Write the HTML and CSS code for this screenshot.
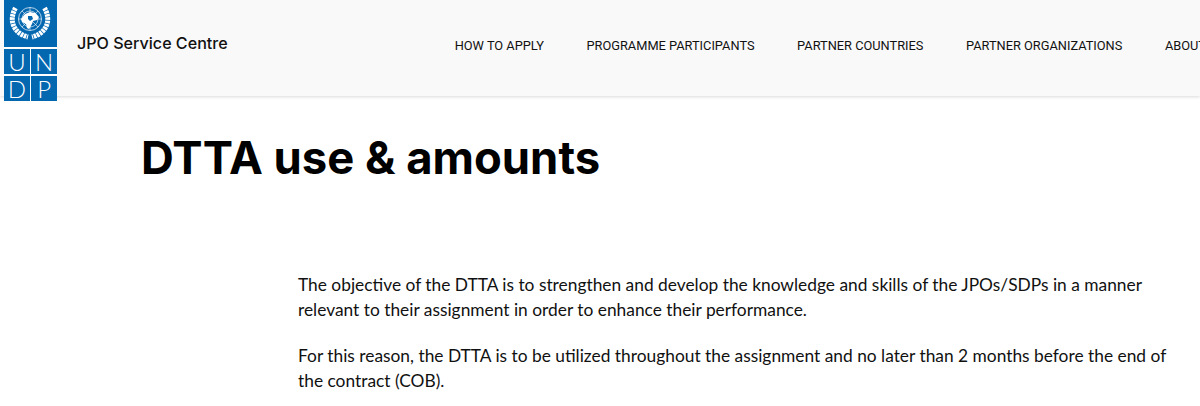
FILE: index.html
```html
<!DOCTYPE html>
<html>
<head>
    <title>DTTA use &amp; amounts</title>
    <link rel="stylesheet" href="styles.css">
</head>
<body>
    <header class="site-header">
        <a class="logo" href="#">
            <div class="logo-top">
                <svg width="53" height="47" viewBox="0 0 53 47">
                    <!-- UN emblem -->
                    <g fill="none" stroke="#fff">
                        <circle cx="26" cy="19" r="11.500" stroke-width="0.7"/>
                        <circle cx="26" cy="19" r="8" stroke-width="0.6"/>
                        <path d="M26 7.500v23M14.500 19h23M18 11l16 16M34 11L18 27" stroke-width="0.6"/>
                        <path d="M11.500 8C4.500 20 9 33 24 37M40.500 8c7 12 2.500 25-12.500 29" stroke-width="5" stroke-dasharray="2.600 .7"/>
                    </g>
                    <path d="M17 19l4-5 5-2 5 1 4 4-2 3-4 1-1 3-3 5-2-1-1-4-4-2z" fill="#fff"/>
                    <path d="M24 16h4l1 3-3 2-2-2z" fill="#0468b1"/>
                </svg>
            </div>
            <div class="logo-letters">
                <span>U</span><span>N</span><span>D</span><span>P</span>
            </div>
        </a>
        <div class="site-name">JPO Service Centre</div>
        <nav class="main-nav">
            <a href="#">HOW TO APPLY</a>
            <a href="#">PROGRAMME PARTICIPANTS</a>
            <a href="#">PARTNER COUNTRIES</a>
            <a href="#">PARTNER ORGANIZATIONS</a>
            <a href="#">ABOUT</a>
        </nav>
    </header>
    <main class="page">
        <h1>DTTA use &amp; amounts</h1>
        <div class="content">
            <p>The objective of the DTTA is to strengthen and develop the knowledge and skills of the JPOs/SDPs in a manner relevant to their assignment in order to enhance their performance.</p>
            <p>For this reason, the DTTA is to be utilized throughout the assignment and no later than 2 months before the end of the contract (COB).</p>
        </div>
    </main>
</body>
</html>
```
FILE: styles.css
```css
html, body { height: 100%; }
body {
    margin: 0;
    overflow: hidden;
    color: #111;
    background-color: #fff;
    font-family: "Lato", "Open Sans", sans-serif;
}
a { color: inherit; text-decoration: none; }

.site-header {
    display: flex;
    height: 96px;
    padding-left: 4px;
    background-color: #f9f9f9;
    box-shadow: 0 1px 3px rgba(0, 0, 0, 0.15);
    white-space: nowrap;
}
.logo {
    flex: none;
    display: block;
    width: 53px;
    height: 101px;
    background-color: #fff;
}
.logo-top {
    height: 47px;
    background-color: #0468b1;
}
.logo-top svg { display: block; }
.logo-letters {
    display: grid;
    grid-template-columns: 1fr 1fr;
    gap: 1.5px;
    padding-top: 2px;
}
.logo-letters span {
    height: 25.250px;
    background-color: #0468b1;
    color: #fff;
    font-size: 24px;
    font-weight: 300;
    line-height: 25px;
    text-align: center;
}
.site-name {
    flex: none;
    margin: 34px 0 0 20px;
    font-family: "Inter", sans-serif;
    font-size: 16.100px;
    font-weight: 500;
    line-height: 18px;
}
.main-nav {
    display: flex;
    gap: 42.600px;
    margin: 38px 0 0 227px;
    font-family: "Roboto", sans-serif;
    font-size: 12.800px;
    line-height: 15px;
}
.page { padding: 33px 0 0 141px; }
h1 {
    margin: 0;
    color: #000;
    font-family: "Inter", sans-serif;
    font-size: 45.400px;
    font-weight: 700;
    line-height: 58px;
}
.content {
    width: 880px;
    margin: 85px 0 0 157px;
    font-size: 17.350px;
    line-height: 25px;
}
.content p { margin: 0 0 21px; }
```
